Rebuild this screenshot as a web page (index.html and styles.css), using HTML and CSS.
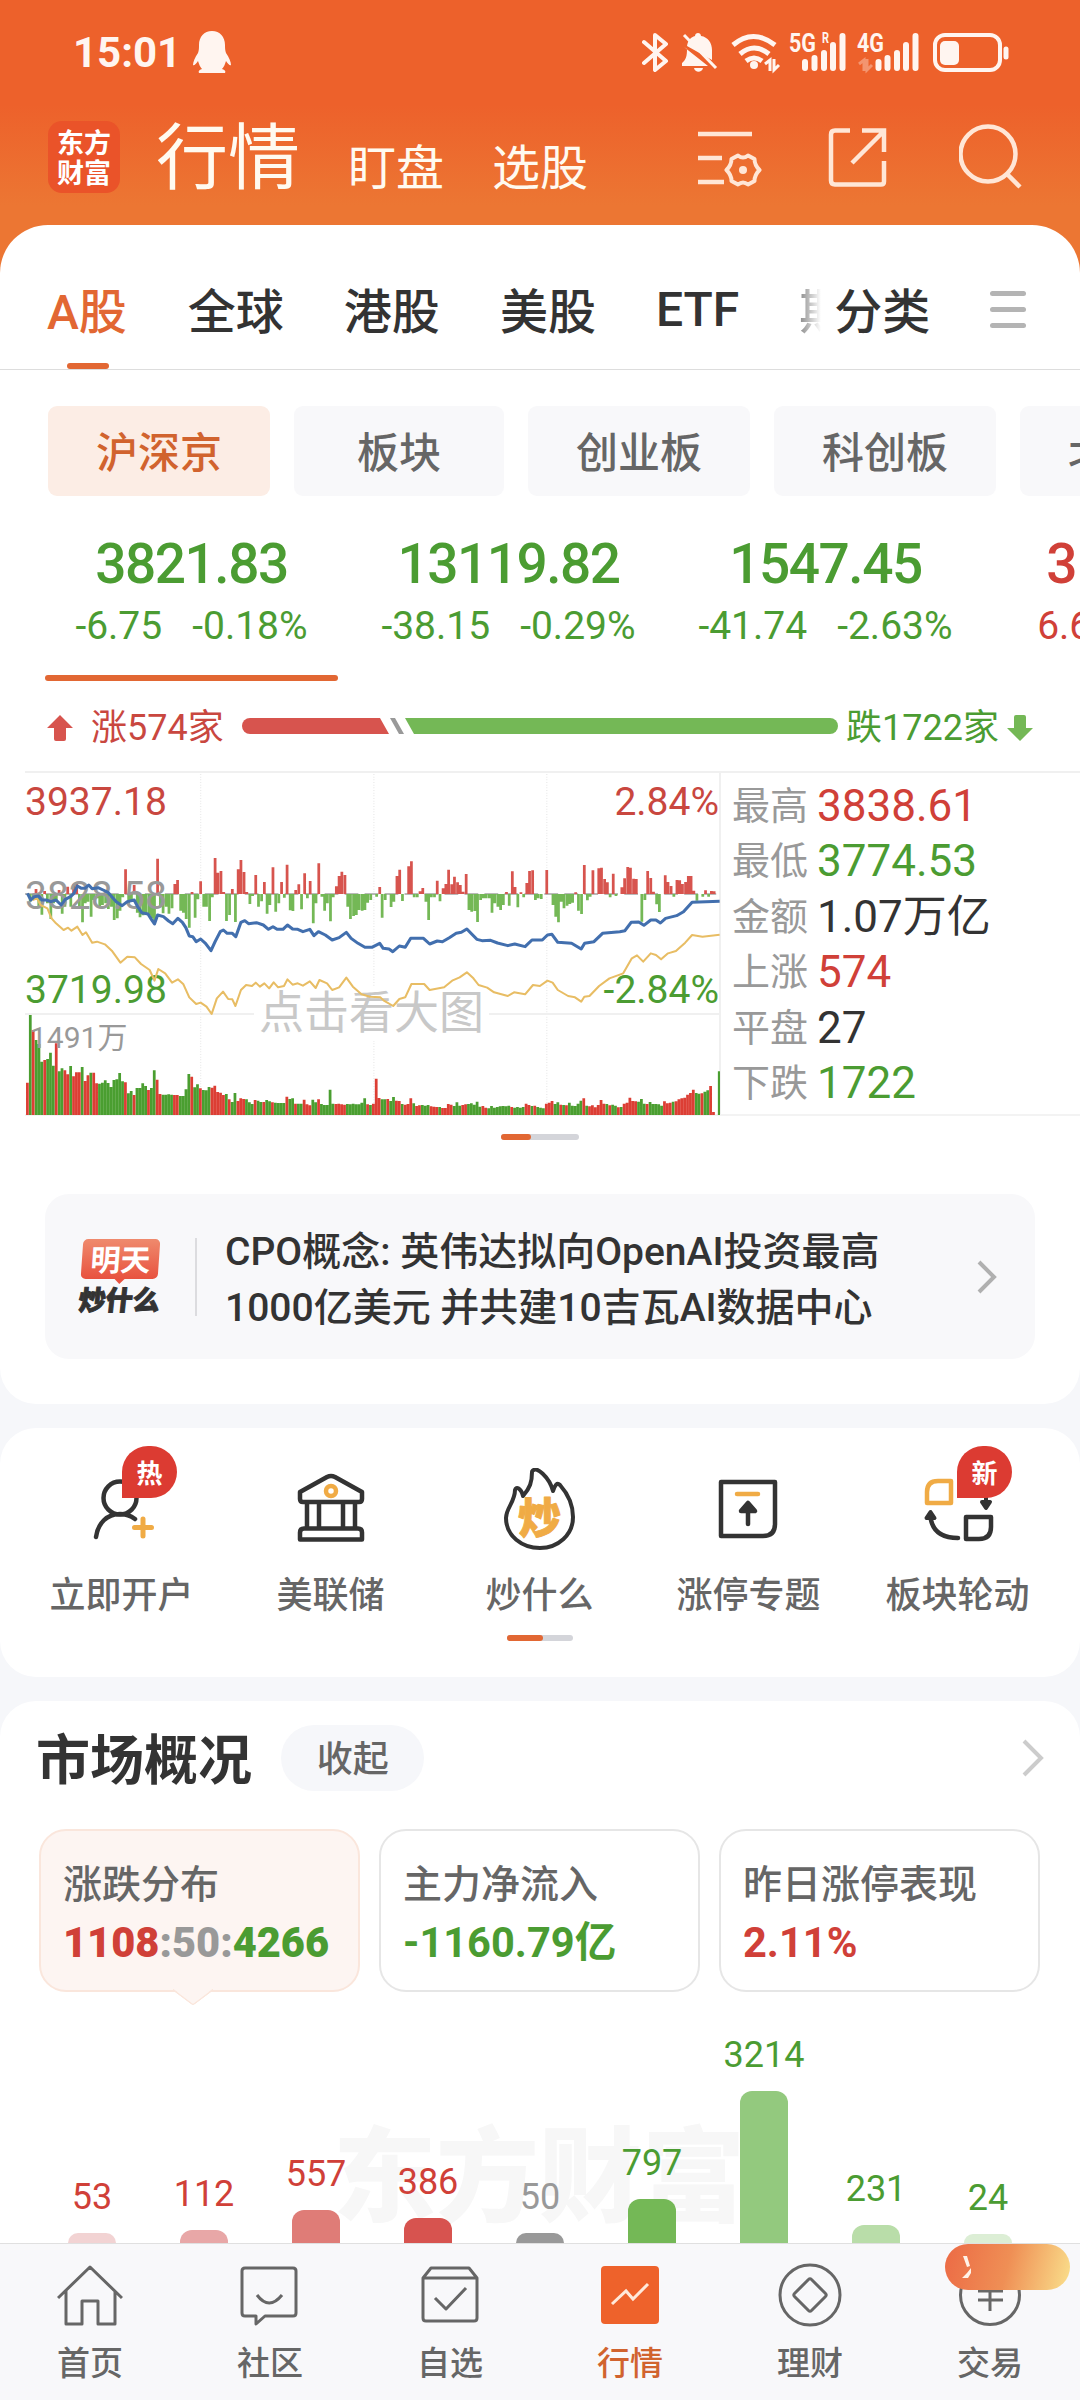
FILE: index.html
```html
<!DOCTYPE html>
<html lang="zh-CN">
<head>
  <meta charset="UTF-8">
  <meta name="viewport" content="width=device-width, initial-scale=1.0">
  <title>东方财富 - 行情</title>
  <link rel="stylesheet" href="styles.css">
</head>
<body>
  <div class="app">
    <div class="content">
      <div class="status-bar">
        <span class="time">15:01</span>
        <svg class="penguin" width="38" height="42" viewBox="0 0 38 42"><path d="M19 0C11 0 6 6 6 14c0 3 0 5-1 8-3 4-5 9-5 12 1 1 3-1 5-4 1 3 2 6 4 8-3 1-4 2-3 4h26c1-2 0-3-3-4 2-2 3-5 4-8 2 3 4 5 5 4 0-3-2-8-5-12-1-3-1-5-1-8C32 6 27 0 19 0z" fill="#fff5f0"/></svg>
        <div class="status-icons">
          <svg width="370" height="44" viewBox="0 0 370 44" fill="none" stroke="#fff5f0">
            <path d="M2 11l22 19-11 9V4l11 9L2 32" stroke-width="4" stroke-linejoin="round" stroke-linecap="round"/>
            <g stroke="none" fill="#fff5f0">
              <path d="M45 15c1-6 4-9 8-10 0-4 6-4 6 0 7 1 11 7 11 14v10zM42 16l24 19H40v-3c4-3 5-7 5-14zM52 37h9c-1 5-8 5-9 0z"/>
            </g>
            <path d="M42 4l32 33" stroke-width="3"/>
            <g stroke-width="5">
              <path d="M91 14q20-17 42 0M98 23q14-12 29 0M104 30q8-6 16 0"/>
            </g>
            <circle cx="112" cy="34" r="4" fill="#fff5f0" stroke="none"/>
            <path d="M123 33l5-4v11M132 28v11l5-5" stroke-width="3"/>
            <g stroke-width="6" stroke-linecap="round">
              <path d="M163 31v6M172.500 27v10M182 22v15M191 14v23M200.500 5v32"/>
              <path d="M236.500 31v6M245.500 27v10M255 22v15M264 14v23M273.500 5v32"/>
            </g>
            <path d="M217 33l5-4v11M225 28v11l5-5" stroke-width="3" opacity=".35"/>
            <rect x="293" y="4" width="65" height="35" rx="10" stroke-width="4"/>
            <rect x="298" y="10" width="19" height="24" rx="5" fill="#fff5f0" stroke="none"/>
            <path d="M364 18v8" stroke-width="5" stroke-linecap="round"/>
            <g stroke="none" fill="#fff5f0" class="net-text">
              <text x="147" y="21" textLength="27" lengthAdjust="spacingAndGlyphs">5G</text>
              <text x="215" y="21" textLength="27" lengthAdjust="spacingAndGlyphs">4G</text>
              <text x="180" y="12" class="net-small" textLength="7" lengthAdjust="spacingAndGlyphs">R</text>
            </g>
          </svg>
        </div>
      </div>

      <div class="title-bar">
        <div class="logo"><span>东方</span><span>财富</span></div>
        <h1>行情</h1>
        <span class="title-link">盯盘</span>
        <span class="title-link">选股</span>
        <div class="title-icons">
          <svg width="64" height="60" viewBox="0 0 64 60" fill="none" stroke="#ffe6d6" stroke-width="4.500">
            <path d="M0 6h54M0 30h24M0 54h26"/>
            <path d="M40 27.500q5 4 10 0l6.500 3.500q0 6 5 11-5 5-5 11L50 56.500q-5-4-10 0L33.500 53q0-6-5-11 5-5 5-11z" stroke-linejoin="round" stroke-width="4"/>
            <circle cx="45" cy="42" r="4" fill="#ffe6d6" stroke="none"/>
          </svg>
          <svg width="60" height="60" viewBox="0 0 60 60" fill="none" stroke="#ffe6d6" stroke-width="4.500">
            <path d="M22 3.500H7q-4 0-4 4v46q0 4 4 4h46q3 0 3-3V34M34 3.500h22V25M56 4L24 36"/>
          </svg>
          <svg width="64" height="66" viewBox="0 0 64 66" fill="none" stroke="#ffe6d6" stroke-width="4.500">
            <circle cx="29" cy="30" r="27.500"/>
            <path d="M47 49l14 14"/>
          </svg>
        </div>
      </div>

      <section class="card quote-card">
        <div class="tabs">
          <span class="tab active">A股</span>
          <span class="tab">全球</span>
          <span class="tab">港股</span>
          <span class="tab">美股</span>
          <span class="tab etf">ETF</span>
          <span class="tab cut">期</span>
          <span class="tab">分类</span>
          <div class="menu"><i></i><i></i><i></i></div>
        </div>

        <div class="chips">
          <span class="chip active">沪深京</span>
          <span class="chip">板块</span>
          <span class="chip">创业板</span>
          <span class="chip">科创板</span>
          <span class="chip">北交所</span>
        </div>

        <div class="indexes">
          <div class="index active">
            <div class="price">3821.83</div>
            <div class="change"><span>-6.75</span><span>-0.18%</span></div>
          </div>
          <div class="index">
            <div class="price">13119.82</div>
            <div class="change"><span>-38.15</span><span>-0.29%</span></div>
          </div>
          <div class="index">
            <div class="price">1547.45</div>
            <div class="change"><span>-41.74</span><span>-2.63%</span></div>
          </div>
          <div class="index up">
            <div class="price">3127.64</div>
            <div class="change"><span>6.62</span><span>0.21%</span></div>
          </div>
        </div>

        <div class="ratio">
          <svg width="28" height="28" viewBox="0 0 28 28"><path d="M14 1L27 14H20V25q0 2-2 2H10q-2 0-2-2V14H1z" fill="#d7544e"/></svg>
          <span class="ratio-up">涨574家</span>
          <svg class="ratio-bar" width="596" height="16" viewBox="0 0 596 16">
            <path d="M8 0H138l9 16H8A8 8 0 0 1 8 0z" fill="#d7544e"/>
            <path d="M148 0h5l9 16h-5z" fill="#999"/>
            <path d="M163 0H588a8 8 0 0 1 0 16H172z" fill="#74b856"/>
          </svg>
          <span class="ratio-down">跌1722家</span>
          <svg width="28" height="28" viewBox="0 0 28 28"><path d="M14 27L1 14H8V3q0-2 2-2h8q2 0 2 2V14h7z" fill="#74b856"/></svg>
        </div>

        <div class="trend">
          <div class="chart">
            <svg id="chart" width="695" height="343" viewBox="73 36 2018 1029" preserveAspectRatio="none">
              <g stroke="#ececec" stroke-width="4" stroke-dasharray="3 5">
                <path d="M583 42V1065M1086 42V1065M1588 42V1065"/>
              </g>
              <path d="M73 762H2090" stroke="#f0f0f0" stroke-width="6"/>
              <path d="M73 402H2080" stroke="#777" stroke-width="3" stroke-dasharray="40 18"/>
              <path id="fall" stroke="#74b856" stroke-width="8"/>
              <path id="rise" stroke="#d7544e" stroke-width="8"/>
              <path id="volDown" stroke="#4a9e30" stroke-width="8"/>
              <path id="volUp" stroke="#dc3e34" stroke-width="8"/>
            </svg>
            <span class="hint">点击看大图</span>
            <span class="label top-left">3937.18</span>
            <span class="label top-right">2.84%</span>
            <span class="label mid-left">3828.58</span>
            <span class="label low-left">3719.98</span>
            <span class="label low-right">-2.84%</span>
            <span class="label volume">1491万</span>
            <svg class="lines" width="695" height="343" viewBox="73 36 2018 1029" preserveAspectRatio="none" fill="none" stroke-linejoin="round">
              <polyline id="avg" stroke="#e8bd64" stroke-width="6"/>
              <polyline id="now" stroke="#426fae" stroke-width="9"/>
            </svg>
          </div>
          <dl class="stats">
            <dt>最高</dt><dd class="red">3838.61</dd>
            <dt>最低</dt><dd class="green">3774.53</dd>
            <dt>金额</dt><dd>1.07万亿</dd>
            <dt>上涨</dt><dd class="red">574</dd>
            <dt>平盘</dt><dd>27</dd>
            <dt>下跌</dt><dd class="green">1722</dd>
          </dl>
        </div>
        <div class="pager"><i></i></div>

        <div class="news">
          <div class="news-logo">
            <span class="news-tag">明天</span>
            <span class="news-sub">炒什么</span>
          </div>
          <p>CPO概念: 英伟达拟向OpenAI投资最高<br>1000亿美元 并共建10吉瓦AI数据中心</p>
          <svg width="20" height="34" viewBox="0 0 20 34" fill="none" stroke="#b0b0b0" stroke-width="4"><path d="M2 2l15 15L2 32"/></svg>
        </div>
      </section>

      <section class="card quick-card">
        <div class="quick">
          <div class="quick-item">
            <svg width="84" height="84" viewBox="0 0 84 84" fill="none" stroke="#333" stroke-width="4.500" stroke-linecap="round">
              <circle cx="40" cy="30" r="16.500"/>
              <path d="M16 69c2-14 11-23 24-23 6 0 11 2 15 5"/>
              <path d="M63 51v17M54.500 59.500h17" stroke="#f0ab45" stroke-width="5"/>
            </svg>
            <span class="badge">热</span>
            <span>立即开户</span>
          </div>
          <div class="quick-item">
            <svg width="84" height="84" viewBox="0 0 84 84" fill="none" stroke="#333" stroke-width="4.500" stroke-linejoin="round">
              <path d="M11 24L38 9q4-2 8 0L73 24v7q0 3-3 3H14q-3 0-3-3zM18 35v25M30 35v25M54 35v25M66 35v25M11 71.500v-7q0-4 4-4h54q4 0 4 4v7z"/>
              <circle cx="42" cy="23" r="5" stroke="#f0ab45" stroke-width="4.500"/>
            </svg>
            <span>美联储</span>
          </div>
          <div class="quick-item">
            <svg width="84" height="84" viewBox="0 0 84 84" fill="none" stroke="#333" stroke-width="4" stroke-linejoin="round">
              <path d="M36 2c2-3 15 6 19 21 2-6 4-9 7-6 8 9 13 21 13 32 0 18-15 31-33 31S8 68 8 50c0-10 9-16 9-28 1-4 6-2 8 6 7-8 9-14 9-24 0-1 1-2 2-2z"/>
              <text x="20" y="66" class="fire-text">炒</text>
            </svg>
            <span>炒什么</span>
          </div>
          <div class="quick-item">
            <svg width="84" height="84" viewBox="0 0 84 84" fill="none" stroke="#333" stroke-width="4.500" stroke-linejoin="round">
              <path d="M14 14h54v42q0 12-12 12H14z"/>
              <path d="M30 26h21" stroke="#f0ab45" stroke-linecap="round"/>
              <path d="M41 42v14" stroke-linecap="round"/>
              <path d="M41 35l7 8H34z" fill="#333"/>
            </svg>
            <span>涨停专题</span>
          </div>
          <div class="quick-item">
            <svg width="84" height="84" viewBox="0 0 84 84" fill="none" stroke="#333" stroke-width="4.500" stroke-linejoin="round">
              <path d="M11 35V24q0-11 11-11h13v22z" stroke="#f0ab45"/>
              <path d="M50 49h25v10q0 12-12 12H50z"/>
              <path d="M15 52q4 18 27 18" stroke-linecap="round"/>
              <path d="M14.500 44l4 6h-8zM70 40l4-6h-8zM70 28v8" fill="#333" stroke-width="4"/>
            </svg>
            <span class="badge badge-new">新</span>
            <span>板块轮动</span>
          </div>
        </div>
        <div class="pager quick-pager"><i></i></div>
      </section>

      <section class="card market-card">
        <div class="market-head">
          <h2>市场概况</h2>
          <span class="fold">收起</span>
          <svg width="22" height="38" viewBox="0 0 22 38" fill="none" stroke="#ccc" stroke-width="4"><path d="M2 2l17 17L2 36"/></svg>
        </div>
        <div class="panels">
          <div class="panel active">
            <div class="panel-name">涨跌分布</div>
            <div class="panel-value"><b class="red">1108</b><b class="grey">:50:</b><b class="green">4266</b></div>
          </div>
          <div class="panel">
            <div class="panel-name">主力净流入</div>
            <div class="panel-value green">-1160.79亿</div>
          </div>
          <div class="panel">
            <div class="panel-name">昨日涨停表现</div>
            <div class="panel-value red">2.11%</div>
          </div>
        </div>
        <div class="spread">
          <span class="watermark">东方财富</span>
          <div class="col red"><span>53</span><i class="r1" style="height:10px"></i></div>
          <div class="col red"><span>112</span><i class="r2" style="height:13px"></i></div>
          <div class="col red"><span>557</span><i class="r3" style="height:33px"></i></div>
          <div class="col red"><span>386</span><i class="r4" style="height:25px"></i></div>
          <div class="col grey"><span>50</span><i class="flat" style="height:10px"></i></div>
          <div class="col green"><span>797</span><i class="g4" style="height:44px"></i></div>
          <div class="col green"><span>3214</span><i class="g3" style="height:152px"></i></div>
          <div class="col green"><span>231</span><i class="g2" style="height:18px"></i></div>
          <div class="col green"><span>24</span><i class="g1" style="height:9px"></i></div>
        </div>
      </section>
    </div>

    <nav class="nav">
      <div class="nav-item">
        <svg width="66" height="66" viewBox="0 0 66 66" fill="none" stroke="#666" stroke-width="3"><path d="M1 35L33 4l32 31M9 28v33h16V38h16v23h17V28" stroke-linejoin="round"/></svg>
        <span>首页</span>
      </div>
      <div class="nav-item">
        <svg width="66" height="66" viewBox="0 0 66 66" fill="none" stroke="#666" stroke-width="3" stroke-linejoin="round"><path d="M8 5h48q3 0 3 3v42q0 3-3 3H28l-9 8v-8H8q-3 0-3-3V8q0-3 3-3zM20 32q12 16 25 0"/></svg>
        <span>社区</span>
      </div>
      <div class="nav-item">
        <svg width="66" height="66" viewBox="0 0 66 66" fill="none" stroke="#666" stroke-width="3" stroke-linejoin="round"><path d="M6 15L14 5h38l8 10v40q0 3-3 3H9q-3 0-3-3zM6 15h54M18 35l11 11 20-21"/></svg>
        <span>自选</span>
      </div>
      <div class="nav-item active">
        <svg width="66" height="66" viewBox="0 0 66 66" fill="none"><rect x="4" y="3" width="58" height="58" rx="4" fill="#ee622b"/><path d="M15 41l14-13 7 8 15-15" stroke="#ffe9da" stroke-width="3"/></svg>
        <span>行情</span>
      </div>
      <div class="nav-item">
        <svg width="66" height="66" viewBox="0 0 66 66" fill="none" stroke="#666" stroke-width="3" stroke-linejoin="round"><circle cx="33" cy="32" r="30"/><path d="M31.500 16.500q1.500-1.500 3 0l14 14q1.500 1.500 0 3l-14 14q-1.500 1.500-3 0l-14-14q-1.500-1.500 0-3z"/></svg>
        <span>理财</span>
      </div>
      <div class="nav-item">
        <svg width="66" height="66" viewBox="0 0 66 66" fill="none" stroke="#666" stroke-width="3"><circle cx="33" cy="32" r="29.500"/><path d="M21 28h25M21 37h25M33 27v21M23 12l10 15 10-15"/></svg>
        <span>交易</span>
        <div class="promo"><svg width="20" height="26" viewBox="0 0 20 26"><path d="M4 2h4l3 10-3 1zM12 14l0 5-3 5-6 0 5-5z" fill="#fff3e8"/></svg></div>
      </div>
    </nav>
  </div>
  <script src="chart.js"></script>
</body>
</html>
```
FILE: styles.css
```css
* {
  box-sizing: border-box;
  margin: 0;
  padding: 0;
}
body {
  width: 1080px;
  background: #f6f7fa;
  color: #333;
  font-family: Roboto, "Noto Sans CJK SC", sans-serif;
}
svg {
  display: block;
  flex: none;
}
i {
  display: block;
}
.red {
  color: #d04038;
}
.green {
  color: #4b9c32;
}
.grey {
  color: #999;
}
.app {
  display: flex;
  flex-direction: column;
  height: 2400px;
  overflow: hidden;
}
.content {
  flex: 1;
  min-height: 0;
  overflow: hidden;
  background: linear-gradient(#ed612b 0, #ed612b 105px, #ec7633 205px, #ec7633 280px, #f6f7fa 280px);
}

/* header */
.status-bar {
  display: flex;
  align-items: flex-start;
  height: 106px;
  padding: 31px 0 0 73px;
}
.time {
  width: 120px;
  color: #fff5f0;
  font-size: 42px;
  font-weight: 700;
  line-height: 43px;
}
.status-icons {
  margin-left: 411px;
}
.net-text {
  font-size: 26px;
  font-weight: 700;
}
.net-small {
  font-size: 14px;
}
.title-bar {
  display: flex;
  height: 119px;
  padding-left: 48px;
  color: #fffaf0;
}
.logo {
  display: flex;
  flex-direction: column;
  align-items: center;
  width: 72px;
  height: 72px;
  margin-top: 15px;
  padding-top: 6px;
  border-radius: 14px;
  background: #ea5329;
  color: #fff;
  font-family: "Noto Sans CJK SC", sans-serif;
  font-size: 27px;
  font-weight: 700;
  line-height: 30px;
}
h1 {
  margin: -7px 0 0 36px;
  font-size: 72px;
  font-weight: 400;
  line-height: 119px;
}
.title-link {
  margin: 4px 0 0 48px;
  font-size: 48px;
  line-height: 117px;
}
.title-icons {
  display: flex;
  align-items: flex-start;
  gap: 66px;
  margin: 18px 0 0 110px;
  padding-top: 3px;
}
.title-icons svg:first-child {
  margin-top: 1px;
}
.title-icons svg:last-child {
  margin: -3px 0 0 5px;
}

.card {
  background: #fff;
}
.quote-card {
  height: 1179px;
  border-radius: 48px 48px 36px 36px;
}

/* market tabs */
.tabs {
  display: flex;
  height: 145px;
  padding-left: 47px;
  border-bottom: 1px solid #ddd;
  font-size: 48px;
  font-weight: 500;
  line-height: 175px;
}
.tab {
  position: relative;
  height: 144px;
  margin-right: 60px;
  white-space: nowrap;
}
.tab.active {
  margin-right: 61px;
  color: #e26733;
}
.tab.active::after {
  content: "";
  position: absolute;
  left: 20px;
  bottom: 0;
  width: 42px;
  height: 6px;
  border-radius: 3px;
  background: #e26733;
}
.tab.etf {
  margin-top: -3px;
}
.tab.cut {
  width: 22px;
  margin-right: 13px;
  overflow: hidden;
  color: transparent;
  background: linear-gradient(90deg, #888, #fff);
  background-clip: text;
  -webkit-background-clip: text;
}
.menu {
  display: flex;
  flex-direction: column;
  gap: 11px;
  margin-top: 66px;
}
.menu i {
  width: 36px;
  height: 5px;
  border-radius: 3px;
  background: #b4b4b4;
}

.chips {
  display: flex;
  gap: 24px;
  margin-top: 36px;
  padding-left: 48px;
  overflow: hidden;
}
.chip {
  flex: none;
  width: 222px;
  height: 90px;
  border-radius: 9px;
  background: #f8f8fa;
  color: #666;
  font-size: 42px;
  font-weight: 500;
  line-height: 96px;
  text-align: center;
}
.chip:nth-child(2) {
  width: 210px;
}
.chip.active {
  background: #fcede5;
  color: #d1632e;
}

/* index quotes */
.indexes {
  display: flex;
  gap: 24px;
  height: 185px;
  padding: 38px 0 0 45px;
  overflow: hidden;
}
.index {
  flex: none;
  width: 293px;
  height: 147px;
  color: #4b9c32;
  text-align: center;
}
.index.up {
  color: #d04038;
}
.index.active {
  position: relative;
}
.index.active::after {
  content: "";
  position: absolute;
  left: 0;
  bottom: 0;
  width: 293px;
  height: 6px;
  border-radius: 3px;
  background: #e26733;
}
.price {
  font-size: 55px;
  font-weight: 500;
  letter-spacing: -1.500px;
  line-height: 60px;
}
.change {
  display: flex;
  justify-content: center;
  gap: 30px;
  margin-top: 11px;
  font-size: 39px;
  line-height: 42px;
  white-space: nowrap;
}

.ratio {
  display: flex;
  align-items: center;
  height: 40px;
  margin-top: 25px;
  padding-left: 46px;
  font-size: 36px;
  line-height: 40px;
  white-space: nowrap;
}
.ratio > svg:first-child, .ratio > svg:last-child {
  margin-top: 3px;
}
.ratio span {
  padding-top: 4px;
}
.ratio-up {
  width: 150px;
  margin-left: 17px;
  color: #c9473f;
}
.ratio-bar {
  margin-left: 1px;
}
.ratio-down {
  margin: 0 7px 0 8px;
  color: #4b9c32;
}

/* intraday chart */
.trend {
  display: flex;
  height: 345px;
  margin: 25px 0 0 25px;
  border-top: 2px solid #f0f0f0;
  border-bottom: 2px solid #f3f3f3;
}
.chart {
  position: relative;
  width: 696px;
  margin-top: -1px;
  border-right: 2px solid #f0f0f0;
}
.lines {
  position: absolute;
  left: 0;
  top: 0;
}
.label {
  position: absolute;
  left: 0;
  font-size: 39px;
  line-height: 40px;
}
.top-left, .top-right {
  top: 10px;
  color: #c9473f;
}
.top-right, .low-right {
  left: auto;
  right: 0;
}
.mid-left {
  top: 104px;
  color: #999;
}
.low-left, .low-right {
  top: 198px;
  color: #4b9c32;
}
.volume {
  top: 246px;
  left: 5px;
  color: #999;
  font-size: 30px;
}
.hint {
  position: absolute;
  left: 229px;
  top: 215px;
  padding: 0 5px;
  background: #fff;
  color: #c8c8c8;
  font-size: 45px;
  line-height: 54px;
}
.stats {
  display: grid;
  grid-template-columns: 85px auto;
  grid-auto-rows: 55.4px;
  align-content: start;
  padding: 5px 0 0 11px;
  line-height: 56px;
}
.stats dt {
  color: #999;
  font-size: 38px;
}
.stats dd {
  font-size: 44px;
}

.pager {
  width: 78px;
  height: 6px;
  margin: 18px auto 0;
  border-radius: 3px;
  background: #d4d5da;
}
.pager i {
  width: 30px;
  height: 6px;
  border-radius: 3px;
  background: #e26733;
}

.news {
  display: flex;
  align-items: center;
  width: 990px;
  height: 165px;
  margin: 54px 0 0 45px;
  padding-left: 32px;
  border-radius: 24px;
  background: #f8f8fa;
}
.news-logo {
  display: flex;
  flex-direction: column;
  align-items: center;
  width: 120px;
  height: 78px;
  padding: 1px 34px 0 0;
  border-right: 2px solid #dcdcdf;
  font-family: "Noto Sans CJK SC", sans-serif;
}
.news-tag {
  position: relative;
  width: 77px;
  height: 40px;
  margin-left: 2px;
  border-radius: 5px;
  background: linear-gradient(#ef8a6d, #e8523f);
  color: #fff;
  font-size: 30px;
  font-weight: 700;
  line-height: 38px;
  text-align: center;
  transform: skewX(-4deg);
}
.news-tag::after {
  content: "";
  position: absolute;
  left: 34px;
  top: 40px;
  border: 5px solid transparent;
  border-top-color: #e8523f;
}
.news-sub {
  margin-top: 4px;
  font-size: 27px;
  font-weight: 900;
  line-height: 32px;
  white-space: nowrap;
  -webkit-text-stroke: 1px #333;
  transform: skewX(-6deg);
}
.news p {
  width: 752px;
  margin-left: 28px;
  padding-top: 6px;
  font-size: 39px;
  font-weight: 500;
  line-height: 56px;
  white-space: nowrap;
}

/* shortcuts */
.quick-card {
  height: 249px;
  margin-top: 24px;
  padding-top: 40px;
  border-radius: 36px;
}
.quick {
  display: flex;
  padding-left: 17px;
}
.quick-item {
  display: flex;
  flex-direction: column;
  align-items: center;
  gap: 22px;
  position: relative;
  width: 209px;
  color: #666;
  font-size: 36px;
  font-weight: 500;
  line-height: 44px;
}
.badge {
  position: absolute;
  left: 105px;
  top: -22px;
  width: 55px;
  height: 52px;
  border-radius: 27px 27px 27px 0;
  background: #dc3b32;
  color: #fff;
  font-size: 26px;
  font-weight: 700;
  line-height: 57px;
  text-align: center;
}
.badge-new {
  left: 104px;
}
.fire-text {
  fill: #f0ab45;
  stroke: #f0ab45;
  stroke-width: 1px;
  font-size: 43px;
  font-weight: 900;
}
.quick-pager {
  width: 66px;
  margin-top: 17px;
}
.quick-pager i {
  width: 36px;
}

/* market overview */
.market-card {
  height: 760px;
  margin-top: 24px;
  padding-top: 24px;
  border-radius: 36px 36px 0 0;
}
.market-head {
  display: flex;
  align-items: center;
  height: 66px;
  padding: 0 36px;
}
h2 {
  width: 246px;
  padding-top: 8px;
  font-size: 54px;
  font-weight: 700;
  line-height: 66px;
}
.fold {
  width: 143px;
  height: 66px;
  margin-right: 598px;
  border-radius: 33px;
  background: #f6f7fa;
  color: #666;
  font-size: 36px;
  font-weight: 500;
  line-height: 71px;
  text-align: center;
}
.panels {
  display: flex;
  gap: 19px;
  padding: 38px 0 0 39px;
}
.panel {
  position: relative;
  width: 321px;
  height: 163px;
  padding: 30px 0 0 22px;
  border: 2px solid #e6e6e6;
  border-radius: 27px;
}
.panel.active {
  border-color: #fae6dc;
  background: #fdf5f2;
}
.panel.active::after {
  content: "";
  position: absolute;
  left: 137px;
  bottom: -15px;
  width: 28px;
  height: 28px;
  border: solid #fae6dc;
  border-width: 0 2px 2px 0;
  border-radius: 3px;
  background: linear-gradient(135deg, transparent 50%, #fdf5f2 50%);
  transform: scaleY(.75) rotate(45deg);
}
.panel-name {
  color: #666;
  font-size: 39px;
  font-weight: 500;
  line-height: 48px;
}
.panel-value {
  margin-top: 9px;
  font-size: 41.600px;
  font-weight: 700;
  line-height: 50px;
  white-space: nowrap;
}
.spread {
  display: flex;
  align-items: flex-end;
  gap: 64px;
  position: relative;
  height: 251px;
  padding-left: 68px;
}
.watermark {
  position: absolute;
  left: 333px;
  top: 122px;
  color: #f7f7f7;
  font-size: 103px;
  font-weight: 900;
  line-height: 130px;
}
.col {
  display: flex;
  flex-direction: column;
  align-items: center;
  position: relative;
  width: 48px;
  font-size: 36px;
  line-height: 40px;
}
.col span {
  margin-bottom: 16px;
}
.col i {
  width: 48px;
  border-radius: 12px 12px 0 0;
}
.r1 { background: #f2d3d3; }
.r2 { background: #e8a7a7; }
.r3 { background: #df7c77; }
.r4 { background: #d7534f; }
.flat { background: #999; }
.g4 { background: #74b856; }
.g3 { background: #93c97e; }
.g2 { background: #b9dda9; }
.g1 { background: #dceed5; }

/* bottom navigation */
.nav {
  display: flex;
  height: 157px;
  border-top: 1px solid #e0e0e0;
  background: #f8f8fa;
}
.nav-item {
  display: flex;
  flex-direction: column;
  align-items: center;
  gap: 15px;
  position: relative;
  width: 180px;
  padding-top: 19px;
  color: #666;
  font-size: 33px;
  font-weight: 500;
  line-height: 40px;
}
.nav-item.active {
  color: #d1632e;
}
.promo {
  position: absolute;
  left: 45px;
  top: 0;
  width: 125px;
  height: 46px;
  padding: 10px 14px;
  border-radius: 23px;
  background: linear-gradient(105deg, #ec6a45, #ef8f55 50%, #fae08c);
}
```
FILE: chart.js
```js
// minute bars above / below the zero line: x, y pairs
const rise = [105,387,130,393,172,390,197,380,214,372,223,370,365,328,390,375,458,296,508,372,516,360,558,396,583,364,625,294,633,338,642,333,650,396,675,387,692,328,700,300,709,336,717,396,743,345,768,366,793,322,818,366,834,314,859,390,868,373,885,340,901,363,926,310,977,379,985,348,993,335,1002,345,1103,381,1153,348,1161,329,1187,319,1195,304,1220,394,1228,384,1270,362,1287,385,1295,372,1303,329,1312,373,1320,350,1329,367,1337,375,1345,395,1354,342,1471,396,1488,334,1496,381,1513,397,1530,369,1538,333,1547,331,1588,330,1672,397,1697,315,1722,331,1739,325,1747,323,1756,357,1764,367,1781,341,1806,382,1814,355,1823,321,1831,323,1840,356,1848,357,1881,333,1890,354,1898,395,1932,346,1940,366,1949,378,1966,360,1974,361,1982,372,1991,366,1999,348,2007,348,2015,392,2049,391,2066,393,2074,394];
const fall = [88,425,97,418,113,445,122,464,138,430,148,477,156,430,164,425,181,461,189,440,206,440,231,440,240,487,248,430,256,425,265,470,273,420,282,415,290,440,298,435,307,430,315,447,324,440,332,480,341,475,349,452,357,412,374,430,382,425,399,458,407,472,416,466,424,460,433,465,441,475,449,490,466,440,474,460,483,440,491,461,500,445,525,452,533,458,541,477,550,503,567,473,575,418,592,440,600,440,609,483,617,412,658,483,667,465,684,486,726,432,734,408,751,440,760,424,776,461,784,435,801,455,810,430,826,413,843,451,851,453,876,448,893,415,910,490,918,430,935,410,943,452,951,430,960,484,968,412,1010,440,1018,477,1027,468,1035,465,1043,450,1052,452,1060,450,1068,428,1077,420,1094,410,1110,473,1119,420,1136,441,1144,425,1169,423,1203,412,1212,412,1237,425,1245,480,1253,412,1262,412,1278,424,1362,450,1370,455,1379,453,1387,486,1396,420,1404,415,1412,415,1421,415,1429,458,1437,430,1446,440,1454,450,1462,435,1479,437,1504,442,1521,412,1555,420,1563,415,1572,417,1606,435,1614,470,1622,487,1630,425,1638,445,1647,437,1655,432,1663,428,1680,452,1689,462,1706,421,1714,410,1772,412,1789,408,1864,485,1873,420,1907,433,1915,456,1957,410,2024,422,2041,410,2058,410];

// volume per minute, negative = falling
const volume = [97,-300,255,-225,-213,-160,165,-168,-187,-148,215,-131,-140,134,122,-147,116,128,128,-144,102,119,-127,127,95,-94,-97,-104,-96,-84,-105,-107,-126,-101,98,-65,-72,60,-81,-81,-95,-87,75,-81,-134,106,63,-61,-61,-62,-61,60,60,-57,-57,-77,-123,115,-83,-92,80,-75,-74,-84,82,88,69,67,60,-63,47,-39,-66,42,50,48,-47,-38,-33,45,-43,-39,39,-45,-41,38,-37,-36,-36,-36,55,-48,-50,34,-34,-34,46,32,29,-46,-38,47,-33,-30,-30,-76,-34,33,34,32,31,-33,-32,-34,-32,-32,-37,-50,32,-30,34,109,51,-47,-47,48,-42,-54,43,42,-33,31,33,50,-35,27,29,-30,-28,-30,26,25,24,-24,21,21,33,31,-27,-38,-28,30,32,-33,-35,-31,-40,-25,27,22,-20,-27,-22,-24,-26,-27,-26,-28,24,-22,-24,-22,-24,34,30,-27,28,-24,-22,-20,34,37,42,-33,-38,31,-30,29,-37,-28,-27,-34,-43,50,-28,26,29,23,30,45,34,-33,29,-31,-28,23,-24,34,37,52,42,41,-40,-48,-34,33,-39,-33,-33,-32,-28,41,35,37,-40,41,47,50,52,61,66,76,-66,-64,65,-70,-74,87,9,0,-131];

const now = "80,400 90,420 100,410 112,408 122,420 135,420 148,425 163,420 178,435 190,418 205,410 215,400 225,378 237,385 247,385 258,375 268,386 285,383 300,390 315,398 325,410 338,425 355,437 370,425 390,420 400,440 412,458 430,462 440,478 449,492 458,465 475,470 490,483 502,491 517,475 530,487 540,503 550,528 560,530 570,545 583,537 597,550 613,572 625,545 640,515 649,510 660,520 675,520 685,530 700,487 711,482 722,491 745,488 765,495 780,508 793,500 805,508 822,508 835,495 850,507 865,508 880,515 900,508 912,527 925,515 945,525 965,540 985,533 1006,517 1020,535 1040,550 1060,562 1080,562 1103,550 1113,565 1130,567 1141,575 1160,558 1177,562 1193,535 1230,535 1248,552 1270,543 1285,545 1305,533 1325,520 1340,517 1356,507 1370,522 1385,538 1400,542 1425,541 1445,549 1475,557 1495,552 1525,560 1545,540 1575,540 1590,525 1603,523 1620,547 1660,550 1688,567 1698,550 1725,545 1750,520 1800,515 1815,512 1833,487 1855,486 1870,496 1890,480 1905,480 1918,489 1933,475 1965,467 1985,455 2010,427 2090,424";
const avg = "95,420 108,415 118,435 138,445 150,475 163,490 185,510 198,503 208,512 225,500 240,525 250,517 268,548 282,545 305,553 325,572 350,608 370,590 392,592 410,612 435,630 449,662 460,627 480,640 500,668 517,658 533,673 550,712 570,732 583,728 600,740 615,762 630,715 648,695 663,717 675,718 684,738 700,690 715,675 732,678 743,668 755,680 768,670 782,685 795,667 808,682 825,678 835,658 850,674 865,670 880,677 900,664 917,684 928,660 950,670 965,690 985,682 1006,653 1025,680 1050,703 1075,710 1105,712 1115,722 1142,738 1160,717 1177,712 1195,672 1232,672 1248,690 1290,682 1315,661 1335,652 1356,637 1375,655 1390,675 1415,683 1435,697 1475,708 1493,697 1525,703 1548,675 1568,678 1590,662 1605,668 1620,690 1650,708 1670,712 1688,725 1697,710 1712,708 1740,678 1770,655 1810,640 1835,595 1850,586 1868,605 1890,580 1905,585 1920,598 1940,580 1963,573 1990,548 2010,525 2040,530 2090,524";

function bars(list) {
  let d = "";
  for (let i = 0; i < list.length; i += 2) {
    d += "M" + list[i] + " 402V" + list[i + 1];
  }
  return d;
}

function volumeBars(up) {
  let d = "";
  volume.forEach((v, i) => {
    if (v && (v > 0) === up) {
      d += "M" + (80 + i * 8.37) + " 1065v" + -Math.abs(v);
    }
  });
  return d;
}

document.getElementById("rise").setAttribute("d", bars(rise));
document.getElementById("fall").setAttribute("d", bars(fall));
document.getElementById("volUp").setAttribute("d", volumeBars(true));
document.getElementById("volDown").setAttribute("d", volumeBars(false));
document.getElementById("now").setAttribute("points", now);
document.getElementById("avg").setAttribute("points", avg);
```
